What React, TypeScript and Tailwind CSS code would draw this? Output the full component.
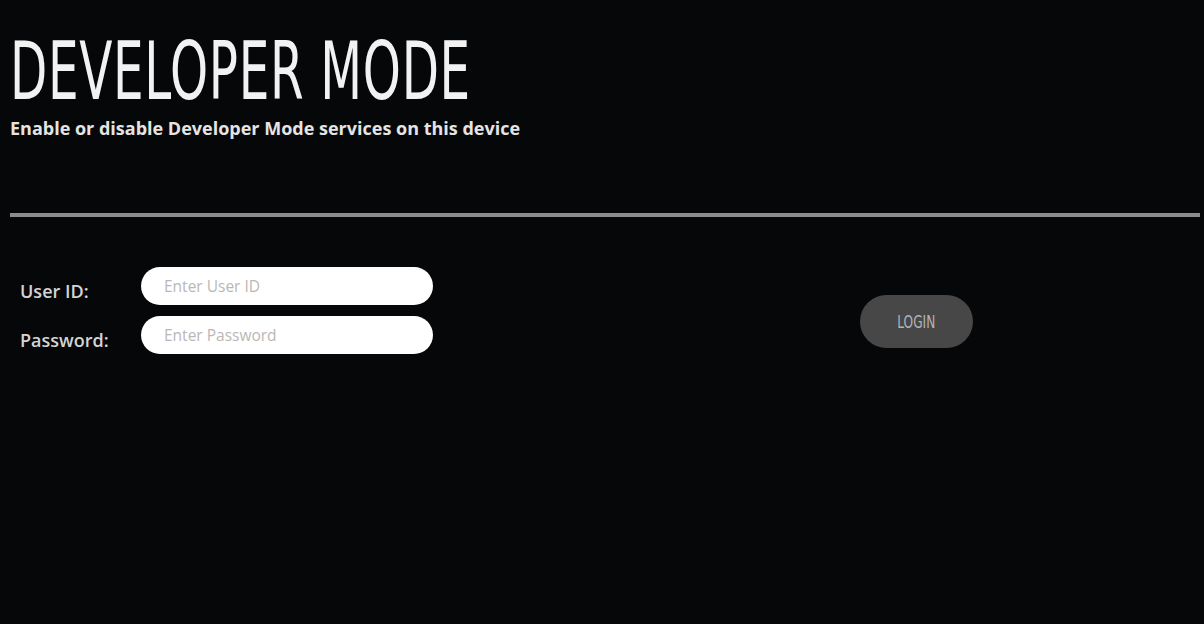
export default function App() {
  return (
    <div className="w-[1204px] h-[624px] bg-[#060709] text-white overflow-hidden" style={{ fontFamily: '"Open Sans", "Liberation Sans", sans-serif' }}>
      <div className="pl-[10px] pt-[28px]">
        <h1
          className="text-[80px] leading-[88px] font-light tracking-[1px] text-[#f2f2f2] origin-left scale-x-[0.673] w-[700px] whitespace-nowrap"
          style={{ fontFamily: '"Liberation Sans Narrow", "DejaVu Sans Condensed", "Liberation Sans", sans-serif', fontStretch: 'condensed' }}
        >
          DEVELOPER MODE
        </h1>
        <p className="text-[18px] font-bold text-[#e4e4e4] leading-[22px] mt-[1px] tracking-[0px]">
          Enable or disable Developer Mode services on this device
        </p>
      </div>
      <div className="mx-[10px] mr-[4px] mt-[74px] h-[4px] bg-[#8b8b8b]" />
      <div className="flex items-start mt-[49px]">
        <div className="flex flex-col gap-[11px] pl-[20px]">
          <div className="flex items-center">
            <label className="w-[121px] text-[18px] font-semibold text-[#d4d4d4] pt-[12px]">User ID:</label>
            <input
              placeholder="Enter User ID"
              className="w-[292px] h-[38px] rounded-full bg-white px-[23px] text-[15.5px] text-gray-700 placeholder:text-[#b8b8b8] outline-none"
            />
          </div>
          <div className="flex items-center">
            <label className="w-[121px] text-[18px] font-semibold text-[#d4d4d4] pt-[10px]">Password:</label>
            <input
              type="password"
              placeholder="Enter Password"
              className="w-[292px] h-[38px] rounded-full bg-white px-[23px] text-[15.5px] text-gray-700 placeholder:text-[#b8b8b8] outline-none"
            />
          </div>
        </div>
        <button
          className="ml-[427px] mt-[29px] w-[113px] h-[53px] rounded-full bg-[#474747] text-[#b4b4b4] text-[18px] font-medium"
          style={{ fontFamily: '"Liberation Sans Narrow", "DejaVu Sans Condensed", "Liberation Sans", sans-serif', fontStretch: 'condensed' }}
        >
          <span className="inline-block scale-x-[0.75]">LOGIN</span>
        </button>
      </div>
    </div>
  )
}
